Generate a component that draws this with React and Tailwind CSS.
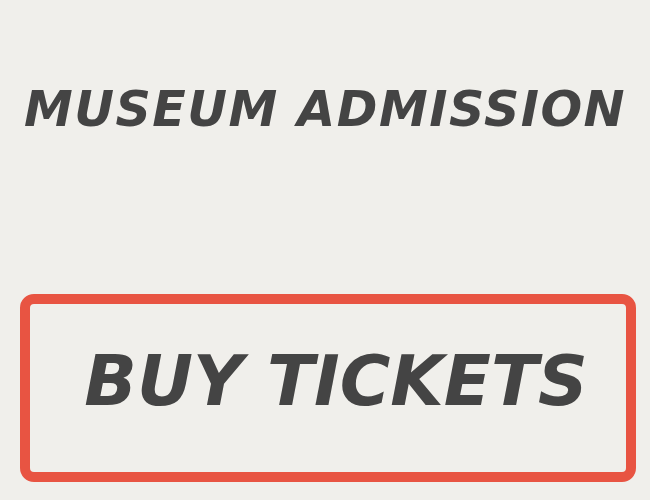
export default function App() {
  return (
    <div className="w-[650px] h-[500px] bg-[#f0efeb] flex flex-col font-['DejaVu_Sans',sans-serif] text-[#444444]">
      <h1 className="h-[219px] flex items-center justify-center text-[49px] font-bold italic tracking-[1.5px]">
        MUSEUM ADMISSION
      </h1>
      <div className="pt-[75px] pl-[20px]">
        <button className="w-[616px] h-[188px] border-[10px] border-[#e85442] rounded-[14px] flex items-center justify-center pl-[16px] pb-[12px] text-[69px] font-bold italic">
          BUY TICKETS
        </button>
      </div>
    </div>
  );
}
